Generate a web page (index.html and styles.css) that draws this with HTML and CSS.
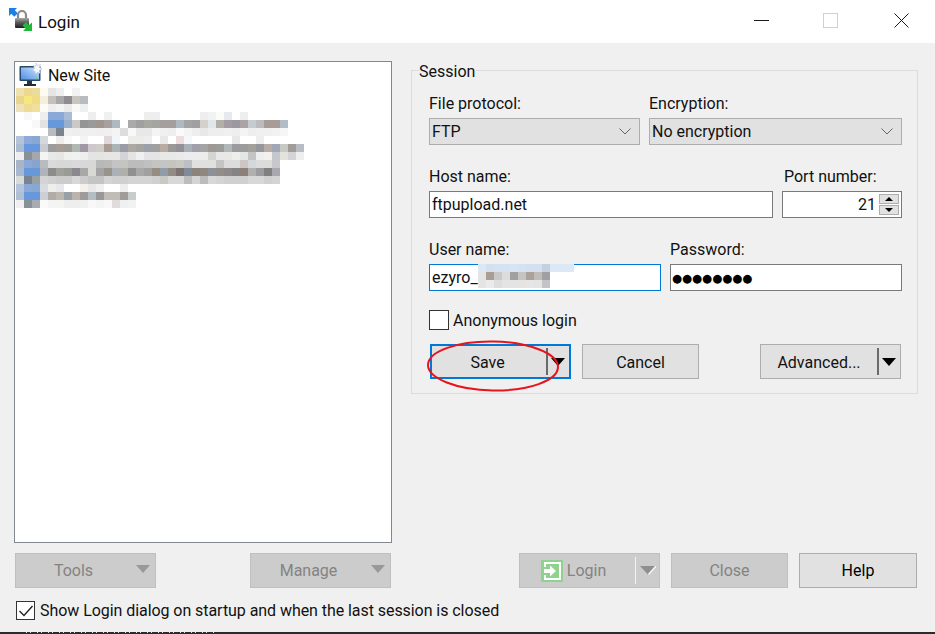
FILE: index.html
```html
<!DOCTYPE html>
<html lang="en">
<head>
<meta charset="utf-8">
<title>Login</title>
<link rel="stylesheet" href="styles.css">
</head>
<body>
<div class="window">
  <header class="titlebar">
    <svg class="app-icon" viewBox="0 0 24 24" width="24" height="24">
      <defs>
        <linearGradient id="lockBody" x1="0" y1="0" x2="0" y2="1">
          <stop offset="0" stop-color="#a8a8a8"/>
          <stop offset=".45" stop-color="#5c5c5c"/>
          <stop offset="1" stop-color="#1e1e1e"/>
        </linearGradient>
        <linearGradient id="screenFill" x1="0" y1="1" x2="1" y2="0">
          <stop offset="0" stop-color="#4f8fe6"/>
          <stop offset="1" stop-color="#cfe2f8"/>
        </linearGradient>
      </defs>
      <path d="M9 11V7a4 4 0 0 1 8 0v4" fill="none" stroke="#8a8a8a" stroke-width="2.200"/>
      <rect x="6" y="10" width="14" height="10" rx="1" fill="url(#lockBody)"/>
      <path d="M0 0h8L5.800 2.200l3 3-3.500 3.500-3-3L0 8z" fill="#1c7fe8"/>
      <path d="M23 23h-9l2.500-2.500-3-3 3.500-3.500 3 3L23 14.500z" fill="#1fb83a"/>
    </svg>
    <span class="title">Login</span>
    <div class="controls">
      <span class="ctl ctl-min"></span>
      <span class="ctl ctl-max"></span>
      <svg class="ctl-close" viewBox="0 0 15 15" width="15" height="15"><path d="M.5.500l14 14M14.500.500l-14 14" stroke="#1a1a1a" stroke-width="1" fill="none"/></svg>
    </div>
  </header>

  <main class="content">
    <div class="top">
      <section class="tree">
        <div class="tree-row">
          <svg class="site-icon" viewBox="0 0 24 24" width="24" height="24">
            <rect x=".5" y="3" width="21" height="15" rx="1" fill="#264a6e"/>
            <rect x="2" y="4.500" width="18" height="12" fill="url(#screenFill)"/>
            <rect x="17" y="15" width="2" height="1" fill="#5fd06a"/>
            <rect x="8" y="18" width="5" height="3" fill="#333"/>
            <rect x="5" y="21" width="12" height="2" fill="#1d2b3a"/>
            <path d="M17 0l1.500 2.500L21.500 1.500 20.500 4.500 23 6l-2.500 1.500.8 3-2.800-1.200L16.500 11.500 16 8.500 13.500 7.500 15.500 5.500 14.500 2.500 16.800 3z" fill="#f4f7fb" stroke="#a8b8cc" stroke-width=".5"/>
          </svg>
          <span>New Site</span>
        </div>
        <svg class="mosaic" viewBox="16 88 296 120" width="296" height="120">
          <g>
            <rect x="16" y="88" fill="#f0e2b0"/><rect x="24" y="88" fill="#ecd98f"/><rect x="32" y="88" fill="#ecdc9a"/><rect x="40" y="88" fill="#fdfaf0"/><rect x="48" y="88" fill="#e5e5e5"/><rect x="56" y="88" fill="#eeeeee"/><rect x="72" y="88" fill="#f2f2f2"/>
            <rect x="16" y="96" fill="#e8d68e"/><rect x="24" y="96" fill="#f8e77f"/><rect x="32" y="96" fill="#f0dc85"/><rect x="40" y="96" fill="#f3eedd"/><rect x="48" y="96" fill="#c4c0ba"/><rect x="56" y="96" fill="#a8a8a8"/><rect x="64" y="96" fill="#8e8c8e"/><rect x="72" y="96" fill="#c8c5c0"/><rect x="80" y="96" fill="#b8bbc0"/>
            <rect x="16" y="104" fill="#f0e2b8"/><rect x="24" y="104" fill="#efdc94"/><rect x="32" y="104" fill="#f0e09c"/><rect x="40" y="104" fill="#fdfbf3"/><rect x="48" y="104" fill="#eeeeee"/><rect x="56" y="104" fill="#f3f3f3"/><rect x="64" y="104" fill="#eaeaea"/><rect x="72" y="104" fill="#f8f8f6"/><rect x="80" y="104" fill="#eeeff0"/>
            <rect x="24" y="112" fill="#f8f8f8"/><rect x="40" y="112" fill="#eeeeee"/><rect x="48" y="112" fill="#8aa9d8"/><rect x="56" y="112" fill="#8aa9d8"/><rect x="64" y="112" fill="#a8bcd6"/><rect x="88" y="112" fill="#eeeeee"/><rect x="104" y="112" fill="#f0f0f0"/><rect x="144" y="112" fill="#eeeeee"/><rect x="152" y="112" fill="#eeeeee"/><rect x="200" y="112" fill="#eeeeee"/><rect x="208" y="112" fill="#f0f2f4"/><rect x="216" y="112" fill="#fcfcf6"/><rect x="224" y="112" fill="#e8e8f0"/><rect x="240" y="112" fill="#eeeeee"/>
            <rect x="32" y="120" fill="#f8f8f8"/><rect x="40" y="120" fill="#e0e2e4"/><rect x="48" y="120" fill="#6898dc"/><rect x="56" y="120" fill="#6898dc"/><rect x="64" y="120" fill="#98b0cc"/><rect x="72" y="120" fill="#ccc8c8"/><rect x="80" y="120" fill="#959595"/><rect x="88" y="120" fill="#9a9a9a"/><rect x="96" y="120" fill="#a09590"/><rect x="104" y="120" fill="#a8a0a0"/><rect x="112" y="120" fill="#b0b8c0"/><rect x="128" y="120" fill="#aaaaaa"/><rect x="136" y="120" fill="#a0a0a0"/><rect x="144" y="120" fill="#a8a8a0"/><rect x="152" y="120" fill="#a4a4a0"/><rect x="160" y="120" fill="#a49e9c"/><rect x="168" y="120" fill="#a49e9c"/><rect x="176" y="120" fill="#b0b8c0"/><rect x="184" y="120" fill="#a4a4a4"/><rect x="192" y="120" fill="#a0a0a0"/><rect x="200" y="120" fill="#d4d0cc"/><rect x="208" y="120" fill="#e0e6ea"/><rect x="216" y="120" fill="#b0b0a8"/><rect x="224" y="120" fill="#a49ca4"/><rect x="232" y="120" fill="#9c98a0"/><rect x="240" y="120" fill="#aca4a4"/><rect x="248" y="120" fill="#c4ccd0"/><rect x="256" y="120" fill="#bcbcc0"/><rect x="264" y="120" fill="#a89c98"/><rect x="272" y="120" fill="#a89c98"/><rect x="280" y="120" fill="#b0bcc8"/>
            <rect x="48" y="128" fill="#b8bcc0"/><rect x="56" y="128" fill="#788490"/><rect x="64" y="128" fill="#f0f0f0"/><rect x="72" y="128" fill="#eeeeee"/><rect x="80" y="128" fill="#f0f0f0"/><rect x="88" y="128" fill="#f0f0f0"/><rect x="96" y="128" fill="#f0eeee"/><rect x="104" y="128" fill="#f0f0f0"/><rect x="112" y="128" fill="#f4f4f4"/><rect x="120" y="128" fill="#dddddd"/><rect x="128" y="128" fill="#f8f8f8"/><rect x="136" y="128" fill="#e8e8e8"/><rect x="144" y="128" fill="#e8e8e8"/><rect x="152" y="128" fill="#f4f4f4"/><rect x="160" y="128" fill="#f0f0f0"/><rect x="168" y="128" fill="#eeeeee"/><rect x="176" y="128" fill="#fafafa"/><rect x="184" y="128" fill="#f4f4f4"/><rect x="192" y="128" fill="#eeeeee"/><rect x="200" y="128" fill="#e8e8e8"/><rect x="208" y="128" fill="#eeeeee"/><rect x="216" y="128" fill="#eeeeee"/><rect x="224" y="128" fill="#f0f0f0"/><rect x="232" y="128" fill="#eeeeee"/><rect x="240" y="128" fill="#f4f4f4"/><rect x="248" y="128" fill="#eeeeee"/><rect x="256" y="128" fill="#f0f0f0"/><rect x="264" y="128" fill="#f0f0f0"/><rect x="272" y="128" fill="#f4f2f0"/><rect x="280" y="128" fill="#f6f6f6"/>
            <rect x="16" y="136" fill="#b4c4d8"/><rect x="24" y="136" fill="#8eaadc"/><rect x="32" y="136" fill="#88a8d4"/><rect x="40" y="136" fill="#d4d8dc"/><rect x="56" y="136" fill="#f0ecea"/><rect x="64" y="136" fill="#f8fafa"/><rect x="80" y="136" fill="#f4f4f4"/><rect x="104" y="136" fill="#e0d8d8"/><rect x="112" y="136" fill="#f0f6fa"/><rect x="128" y="136" fill="#ececea"/><rect x="136" y="136" fill="#ececea"/><rect x="144" y="136" fill="#eeeeee"/><rect x="160" y="136" fill="#e8e8e8"/><rect x="176" y="136" fill="#ecdede"/><rect x="184" y="136" fill="#f4f8fa"/><rect x="232" y="136" fill="#e8e8e8"/><rect x="256" y="136" fill="#eeeeee"/>
            <rect x="16" y="144" fill="#aabcd4"/><rect x="24" y="144" fill="#6898dc"/><rect x="32" y="144" fill="#6898dc"/><rect x="40" y="144" fill="#c8ccd0"/><rect x="48" y="144" fill="#9c9c9c"/><rect x="56" y="144" fill="#a89c98"/><rect x="64" y="144" fill="#a09c98"/><rect x="72" y="144" fill="#b0b8b4"/><rect x="80" y="144" fill="#a098a4"/><rect x="88" y="144" fill="#ccc8cc"/><rect x="96" y="144" fill="#d0ccc8"/><rect x="104" y="144" fill="#a89c94"/><rect x="112" y="144" fill="#acb4b8"/><rect x="120" y="144" fill="#9c9ca8"/><rect x="128" y="144" fill="#aca8a4"/><rect x="136" y="144" fill="#a4a4a0"/><rect x="144" y="144" fill="#9ca0a8"/><rect x="152" y="144" fill="#a0a0a0"/><rect x="160" y="144" fill="#b8aca0"/><rect x="168" y="144" fill="#9c9898"/><rect x="176" y="144" fill="#949098"/><rect x="184" y="144" fill="#a8b0b8"/><rect x="192" y="144" fill="#a0a0ac"/><rect x="200" y="144" fill="#a4a4a4"/><rect x="208" y="144" fill="#a09894"/><rect x="216" y="144" fill="#9c9c98"/><rect x="224" y="144" fill="#b0b8b8"/><rect x="232" y="144" fill="#9c9ca0"/><rect x="240" y="144" fill="#9c9c9c"/><rect x="248" y="144" fill="#a4a09c"/><rect x="256" y="144" fill="#94989c"/><rect x="264" y="144" fill="#b8aca8"/><rect x="272" y="144" fill="#a0a8b8"/><rect x="280" y="144" fill="#c8c8c4"/><rect x="288" y="144" fill="#a09c98"/><rect x="296" y="144" fill="#b8bcc4"/>
            <rect x="16" y="152" fill="#eeeeee"/><rect x="24" y="152" fill="#889098"/><rect x="32" y="152" fill="#a4a8ac"/><rect x="40" y="152" fill="#f4f4f4"/><rect x="48" y="152" fill="#e8e8e8"/><rect x="56" y="152" fill="#e8e6e4"/><rect x="64" y="152" fill="#f0f0ee"/><rect x="72" y="152" fill="#f0f2f2"/><rect x="80" y="152" fill="#eeeeee"/><rect x="88" y="152" fill="#e4e4e4"/><rect x="96" y="152" fill="#e4e4e2"/><rect x="104" y="152" fill="#e6e6e4"/><rect x="112" y="152" fill="#e6e6e4"/><rect x="120" y="152" fill="#d4d4d8"/><rect x="128" y="152" fill="#e4e4e2"/><rect x="136" y="152" fill="#f0f0f2"/><rect x="144" y="152" fill="#e4e4e6"/><rect x="152" y="152" fill="#e4e4e4"/><rect x="160" y="152" fill="#e8e8e6"/><rect x="168" y="152" fill="#e8e8e8"/><rect x="176" y="152" fill="#eaeaea"/><rect x="184" y="152" fill="#ececec"/><rect x="192" y="152" fill="#ececec"/><rect x="200" y="152" fill="#ececec"/><rect x="208" y="152" fill="#d4d4d2"/><rect x="216" y="152" fill="#e8e8e8"/><rect x="224" y="152" fill="#e8e8e6"/><rect x="232" y="152" fill="#eeeeec"/><rect x="240" y="152" fill="#e4e6e6"/><rect x="248" y="152" fill="#c4c4c4"/><rect x="256" y="152" fill="#eeeef0"/><rect x="264" y="152" fill="#f4f0ec"/><rect x="272" y="152" fill="#c4c8cc"/><rect x="280" y="152" fill="#e4e2dc"/><rect x="288" y="152" fill="#d4d4d8"/><rect x="296" y="152" fill="#eeeeee"/>
            <rect x="16" y="160" fill="#a8b4c8"/><rect x="24" y="160" fill="#8ca8d4"/><rect x="32" y="160" fill="#88a4cc"/><rect x="40" y="160" fill="#b8bcc0"/><rect x="48" y="160" fill="#dadada"/><rect x="56" y="160" fill="#d8d8d8"/><rect x="64" y="160" fill="#d8d8d8"/><rect x="72" y="160" fill="#dadada"/><rect x="80" y="160" fill="#d8d8d8"/><rect x="88" y="160" fill="#d8d8d8"/><rect x="96" y="160" fill="#b8b8b8"/><rect x="104" y="160" fill="#bcbab6"/><rect x="112" y="160" fill="#c4c4c4"/><rect x="120" y="160" fill="#c4c4c0"/><rect x="128" y="160" fill="#bcbcbc"/><rect x="136" y="160" fill="#bcbcbc"/><rect x="144" y="160" fill="#c0c0c0"/><rect x="152" y="160" fill="#c4c4c0"/><rect x="160" y="160" fill="#c4c4c4"/><rect x="168" y="160" fill="#c4c4c0"/><rect x="176" y="160" fill="#c8c8c4"/><rect x="184" y="160" fill="#bcc0c4"/><rect x="192" y="160" fill="#e0e0e0"/><rect x="200" y="160" fill="#e0e0de"/><rect x="208" y="160" fill="#e0e0de"/><rect x="216" y="160" fill="#c4c4c4"/><rect x="224" y="160" fill="#dcdcdc"/><rect x="232" y="160" fill="#dcdcdc"/><rect x="240" y="160" fill="#ccc6c4"/><rect x="248" y="160" fill="#d4d8dc"/><rect x="256" y="160" fill="#dcdcdc"/><rect x="264" y="160" fill="#dcdcd8"/><rect x="272" y="160" fill="#c8c8cc"/>
            <rect x="16" y="168" fill="#a8b8d0"/><rect x="24" y="168" fill="#6898dc"/><rect x="32" y="168" fill="#6898dc"/><rect x="40" y="168" fill="#b0b4b8"/><rect x="48" y="168" fill="#8c8c8c"/><rect x="56" y="168" fill="#a0a09c"/><rect x="64" y="168" fill="#989c94"/><rect x="72" y="168" fill="#8c8890"/><rect x="80" y="168" fill="#a8a8a8"/><rect x="88" y="168" fill="#d8d8d4"/><rect x="96" y="168" fill="#a4a4a4"/><rect x="104" y="168" fill="#98948c"/><rect x="112" y="168" fill="#acb0b8"/><rect x="120" y="168" fill="#b0b0a8"/><rect x="128" y="168" fill="#909090"/><rect x="136" y="168" fill="#a8a8a8"/><rect x="144" y="168" fill="#a0a0a0"/><rect x="152" y="168" fill="#988c80"/><rect x="160" y="168" fill="#909ca8"/><rect x="168" y="168" fill="#948c84"/><rect x="176" y="168" fill="#7c7470"/><rect x="184" y="168" fill="#808a98"/><rect x="192" y="168" fill="#8c847c"/><rect x="200" y="168" fill="#908880"/><rect x="208" y="168" fill="#8c9098"/><rect x="216" y="168" fill="#948c88"/><rect x="224" y="168" fill="#8c888c"/><rect x="232" y="168" fill="#848484"/><rect x="240" y="168" fill="#8c8078"/><rect x="248" y="168" fill="#b0b0b0"/><rect x="256" y="168" fill="#9c9ca0"/><rect x="264" y="168" fill="#808080"/><rect x="272" y="168" fill="#a8a8b0"/>
            <rect x="16" y="176" fill="#d8dcd8"/><rect x="24" y="176" fill="#788490"/><rect x="32" y="176" fill="#98a0a4"/><rect x="40" y="176" fill="#d4d4d4"/><rect x="48" y="176" fill="#d0d0d0"/><rect x="56" y="176" fill="#cccccc"/><rect x="64" y="176" fill="#cccccc"/><rect x="72" y="176" fill="#d8d8d8"/><rect x="80" y="176" fill="#cccccc"/><rect x="88" y="176" fill="#c4c4c4"/><rect x="96" y="176" fill="#c4c4c4"/><rect x="104" y="176" fill="#d4d4d4"/><rect x="112" y="176" fill="#d0d0d0"/><rect x="120" y="176" fill="#d0d0d0"/><rect x="128" y="176" fill="#d4d4d4"/><rect x="136" y="176" fill="#d4d4d4"/><rect x="144" y="176" fill="#d4d4d4"/><rect x="152" y="176" fill="#d0d0d0"/><rect x="160" y="176" fill="#c8c8c4"/><rect x="168" y="176" fill="#d8d8d8"/><rect x="176" y="176" fill="#d8d8d8"/><rect x="184" y="176" fill="#bcbcbc"/><rect x="192" y="176" fill="#d4d4d4"/><rect x="200" y="176" fill="#bcbcbc"/><rect x="208" y="176" fill="#d8d8d8"/><rect x="216" y="176" fill="#d4d4d4"/><rect x="224" y="176" fill="#d0d0d0"/><rect x="232" y="176" fill="#d0d0d0"/><rect x="240" y="176" fill="#d0d0d0"/><rect x="248" y="176" fill="#d8d8d8"/><rect x="256" y="176" fill="#d8d8d8"/><rect x="264" y="176" fill="#d0d0d0"/><rect x="272" y="176" fill="#d4d4d4"/>
            <rect x="16" y="184" fill="#b4c4dc"/><rect x="24" y="184" fill="#8ca8d8"/><rect x="32" y="184" fill="#88a8d4"/><rect x="40" y="184" fill="#d8dce0"/><rect x="48" y="184" fill="#f0eeea"/><rect x="56" y="184" fill="#e8e8ec"/><rect x="80" y="184" fill="#f4f0ec"/><rect x="88" y="184" fill="#e8e8ea"/><rect x="96" y="184" fill="#eef0f2"/><rect x="120" y="184" fill="#eeeeee"/>
            <rect x="16" y="192" fill="#b0c0d4"/><rect x="24" y="192" fill="#6898dc"/><rect x="32" y="192" fill="#6898dc"/><rect x="40" y="192" fill="#ccd0d4"/><rect x="48" y="192" fill="#b0aca8"/><rect x="56" y="192" fill="#bcb8b0"/><rect x="64" y="192" fill="#9aa0a8"/><rect x="72" y="192" fill="#bcb4ac"/><rect x="80" y="192" fill="#a09a98"/><rect x="88" y="192" fill="#b4bcc4"/><rect x="96" y="192" fill="#989898"/><rect x="104" y="192" fill="#c0bcb8"/><rect x="112" y="192" fill="#c0bcb8"/><rect x="120" y="192" fill="#a09c98"/><rect x="128" y="192" fill="#c8cccc"/>
            <rect x="16" y="200" fill="#f0f0f0"/><rect x="24" y="200" fill="#889098"/><rect x="32" y="200" fill="#a8acb0"/><rect x="40" y="200" fill="#fafafa"/><rect x="48" y="200" fill="#f4f4f4"/><rect x="56" y="200" fill="#f4f4f2"/><rect x="64" y="200" fill="#eeeeee"/><rect x="72" y="200" fill="#eeeeee"/><rect x="80" y="200" fill="#f0f0f0"/><rect x="88" y="200" fill="#f8f8f8"/><rect x="96" y="200" fill="#f4f4f4"/><rect x="104" y="200" fill="#f8f8f8"/><rect x="112" y="200" fill="#e0dcdc"/><rect x="120" y="200" fill="#eef0f2"/><rect x="128" y="200" fill="#f2f2f2"/>
          </g>
        </svg>
      </section>

      <fieldset class="session">
        <legend>Session</legend>
        <div class="form-row first">
          <div class="field w-protocol"><label>File protocol:</label><div class="select">FTP<svg class="chev" viewBox="0 0 12 7" width="12" height="7"><path d="M.5.500 6 6l5.500-5.500" fill="none" stroke="#666"/></svg></div></div>
          <div class="field w-encryption"><label>Encryption:</label><div class="select">No encryption<svg class="chev" viewBox="0 0 12 7" width="12" height="7"><path d="M.5.500 6 6l5.500-5.500" fill="none" stroke="#666"/></svg></div></div>
        </div>
        <div class="form-row row-gap">
          <div class="field w-host"><label>Host name:</label><div class="input">ftpupload.net</div></div>
          <div class="field w-port"><label class="port-label">Port number:</label>
            <div class="input port"><span>21</span>
              <div class="spin">
                <span class="spin-btn"><svg viewBox="0 0 10 5" width="10" height="5"><path d="M0 5 5 0l5 5z" fill="#000"/></svg></span>
                <span class="spin-btn"><svg viewBox="0 0 10 5" width="10" height="5"><path d="M0 0l5 5 5-5z" fill="#000"/></svg></span>
              </div>
            </div>
          </div>
        </div>
        <div class="form-row row-gap">
          <div class="field w-half"><label>User name:</label>
            <div class="input focused">ezyro_
              <svg class="blur" viewBox="0 0 98 24" width="98" height="24">
                <g>
                  <rect x="0" y="0" fill="#dde8f6"/><rect x="8" y="0" fill="#d4e0f0"/><rect x="16" y="0" fill="#d4e2f2"/><rect x="24" y="0" fill="#d4e2f2"/><rect x="32" y="0" fill="#d8e4f4"/><rect x="40" y="0" fill="#d4e2f2"/><rect x="48" y="0" fill="#d4e0f0"/><rect x="56" y="0" fill="#d4e0f0"/><rect x="64" y="0" fill="#c4d0e0"/><rect x="72" y="0" fill="#dde8f6"/><rect x="80" y="0" fill="#dde8f6"/><rect x="88" y="0" fill="#dde8f6"/>
                  <rect x="0" y="8" fill="#e4e4e4"/><rect x="8" y="8" fill="#a89e98"/><rect x="16" y="8" fill="#c8c8c8"/><rect x="24" y="8" fill="#dcdcdc"/><rect x="32" y="8" fill="#a0a0a0"/><rect x="40" y="8" fill="#c4c4c4"/><rect x="48" y="8" fill="#aca29c"/><rect x="56" y="8" fill="#c0bcb8"/><rect x="64" y="8" fill="#a0a0a4"/>
                  <rect x="0" y="16" fill="#e4e4e4"/><rect x="8" y="16" fill="#ebebeb"/><rect x="16" y="16" fill="#dedede"/><rect x="24" y="16" fill="#e4e4e4"/><rect x="32" y="16" fill="#e4e4e4"/><rect x="40" y="16" fill="#e4e4e4"/><rect x="48" y="16" fill="#e8e6e4"/><rect x="56" y="16" fill="#e4e4e4"/><rect x="64" y="16" fill="#c4c4c4"/>
                </g>
              </svg>
            </div>
          </div>
          <div class="field w-half"><label>Password:</label><div class="input password">●●●●●●●●</div></div>
        </div>
        <label class="check anon"><span class="box"></span>Anonymous login</label>
        <div class="actions">
          <div class="btn split primary"><span class="btn-main">Save</span><span class="sep"></span><span class="arrow dark"></span></div>
          <div class="btn cancel">Cancel</div>
          <div class="btn split advanced"><span class="btn-main">Advanced...</span><span class="sep"></span><span class="arrow dark"></span></div>
        </div>
      </fieldset>
    </div>

    <div class="bottom">
      <div class="bottom-left">
        <div class="btn disabled menu">Tools<span class="arrow grey"></span></div>
        <div class="btn disabled menu">Manage<span class="arrow grey"></span></div>
      </div>
      <div class="bottom-right">
        <div class="btn disabled split login">
          <span class="btn-main">
            <svg class="login-icon" viewBox="0 0 22 22" width="22" height="22">
              <rect width="22" height="22" rx="1" fill="#8fd18f"/>
              <path d="M4 7V3h15v16H4v-4" fill="none" stroke="#fff" stroke-width="2"/>
              <path d="M3 9h6V5.500l6 5.500-6 5.500V13H3z" fill="#fff"/>
            </svg>Login</span>
          <span class="sep light"></span>
          <svg class="login-arrow" viewBox="0 0 16 9" width="16" height="9"><path d="M0 0h16L8 8.500z" fill="#8f8f8f"/><path d="M16 0 8.500 8.500" stroke="#f4f4f4" stroke-width="1.500" fill="none"/></svg>
        </div>
        <div class="btn disabled close">Close</div>
        <div class="btn help">Help</div>
      </div>
    </div>
    <label class="check startup"><span class="box checked"><svg viewBox="0 0 16 14" width="16" height="14"><path d="M1.500 7l4.500 4.500L14.500 2" fill="none" stroke="#222" stroke-width="1.400"/></svg></span>Show Login dialog on startup and when the last session is closed</label>
  </main>
  <div class="edge"><div class="specks"></div></div>

  <svg class="annotation" viewBox="0 0 140 56" width="140" height="56">
    <ellipse cx="68" cy="26" rx="65" ry="24.500" transform="rotate(1 68 26)" fill="none" stroke="#e8141c" stroke-width="2"/>
  </svg>
</div>
</body>
</html>
```

FILE: styles.css
```css
* { box-sizing: border-box; }
html, body { margin: 0; height: 100%; overflow: hidden; }
body { font-family: Roboto, "Noto Sans", sans-serif; font-size: 16px; color: #111; background: #f0f0f0; }
.window { position: relative; width: 935px; height: 634px; display: flex; flex-direction: column; background: #f0f0f0; }

.titlebar { height: 43px; flex: none; background: #fff; display: flex; align-items: flex-start; padding: 8px 0 0 9px; }
.app-icon { flex: none; }
.title { margin-left: 5px; font-size: 17px; line-height: 24px; margin-top: 2px; }
.controls { margin-left: auto; display: flex; align-items: center; padding-right: 26px; height: 15px; margin-top: 5px; }
.ctl-min { width: 15px; height: 1px; background: #1a1a1a; margin-right: 54px; display: block; }
.ctl-max { width: 15px; height: 15px; border: 1px solid #d0d0d0; margin-right: 56px; display: block; }
.ctl-close { display: block; }

.content { flex: 1; display: flex; flex-direction: column; padding: 18px 17px 0 14px; min-height: 0; }
.top { display: flex; height: 482px; flex: none; }
.tree { width: 378px; height: 482px; flex: none; background: #fff; border: 1px solid #828790; padding: 0 0 0 1px; }
.tree-row { display: flex; align-items: center; height: 25px; padding-left: 3px; }
.tree-row span { margin-left: 5px; padding-top: 2px; letter-spacing: -.1px; }
.site-icon { flex: none; }
.mosaic { display: block; margin-top: 1px; }
.mosaic rect, .blur rect { width: 8px; height: 8px; }

.session { margin: 0 0 0 19px; width: 507px; height: 333px; border: 1px solid #dcdcdc; padding: 0 15px 0 17px; min-width: 0; }
.session legend { padding: 0 1px 0 0; margin-left: -10px; height: 18px; line-height: 22px; }
.form-row { display: flex; justify-content: space-between; }
.first { padding-top: 14px; }
.row-gap { padding-top: 21px; }
.field label { display: block; height: 20px; line-height: 22px; margin-bottom: 5px; }
.field .port-label { padding-left: 2px; }
.w-protocol { width: 211px; }
.w-encryption { width: 253px; }
.w-host { width: 344px; }
.w-port { width: 120px; }
.w-half { width: 232px; }
.select, .input { height: 27px; display: flex; align-items: center; padding-left: 2px; }
.select { background: #e1e1e1; border: 1px solid #adadad; justify-content: space-between; padding-right: 8px; }
.chev { flex: none; }
.input { background: #fff; border: 1px solid #7a7a7a; position: relative; }
.focused { border-color: #0078d7; }
.blur { position: absolute; left: 48px; top: -1px; }
.password { font-family: "DejaVu Sans", sans-serif; font-size: 11.500px; color: #000; padding-left: 1px; }
.port { justify-content: flex-end; padding-right: 2px; }
.port > span { margin-right: 3px; }
.spin { display: flex; flex-direction: column; gap: 1px; width: 20px; flex: none; }
.spin-btn { height: 10px; background: #e1e1e1; border: 1px solid #adadad; display: flex; align-items: center; justify-content: center; }
.spin-btn svg { width: 8px; height: 4px; }

.check { display: flex; align-items: center; }
.box { width: 20px; height: 20px; flex: none; border: 1px solid #333; background: #fff; display: flex; align-items: center; justify-content: center; }
.anon { margin-top: 19px; height: 20px; gap: 4px; }
.actions { display: flex; margin-top: 14px; padding-left: 1px; }

.btn { height: 35px; display: flex; align-items: center; justify-content: center; background: #e1e1e1; border: 1px solid #adadad; position: relative; }
.split { justify-content: flex-start; padding: 0; }
.btn-main { flex: 1; text-align: center; }
.sep { width: 2px; height: 27px; background: #6a6a6a; flex: none; }
.sep.light { background: #f4f4f4; width: 1px; }
.arrow { width: 0; height: 0; border-style: solid; border-width: 8px 7.500px 0; flex: none; margin: 0 4px 0 3px; }
.arrow.dark { border-color: #000 transparent transparent; }
.arrow.grey { border-color: #999 transparent transparent; }
.primary { width: 141px; border: 2px solid #0078d7; }
.primary .btn-main { padding-right: 3px; padding-top: 1px; }
.cancel { width: 117px; margin-left: 11px; padding-top: 1px; }
.advanced { width: 141px; margin-left: 61px; }
.advanced .btn-main { padding-top: 1px; }

.bottom { display: flex; justify-content: space-between; margin-top: 10px; padding-left: 1px; flex: none; }
.bottom-left { display: flex; gap: 94px; }
.bottom-right { display: flex; gap: 11px; margin-right: 1px; }
.disabled { background: #ccc; border-color: #bfbfbf; color: #838383; }
.menu { width: 141px; padding-right: 24px; }
.menu .arrow { position: absolute; right: 5px; top: 11px; margin: 0; }
.login { width: 141px; }
.login .btn-main { display: flex; align-items: center; justify-content: center; gap: 4px; padding-right: 8px; }
.login-icon { flex: none; }
.login-arrow { flex: none; margin: 0 3px 0 4px; }
.close { width: 117px; }
.help { width: 118px; color: #000; }

.startup { margin-top: 13px; margin-left: 2px; gap: 5px; height: 19px; letter-spacing: -.06px; }
.startup .box { width: 19px; height: 19px; }

.edge { height: 2px; flex: none; background: #2b2b2b; }
.specks { width: 190px; height: 1px; margin-left: 26px; background: repeating-linear-gradient(90deg, #d8e4ee 0 1px, transparent 1px 4px, #e8ddd0 4px 5px, transparent 5px 11px); }
.annotation { position: absolute; left: 425px; top: 340px; pointer-events: none; }
```
